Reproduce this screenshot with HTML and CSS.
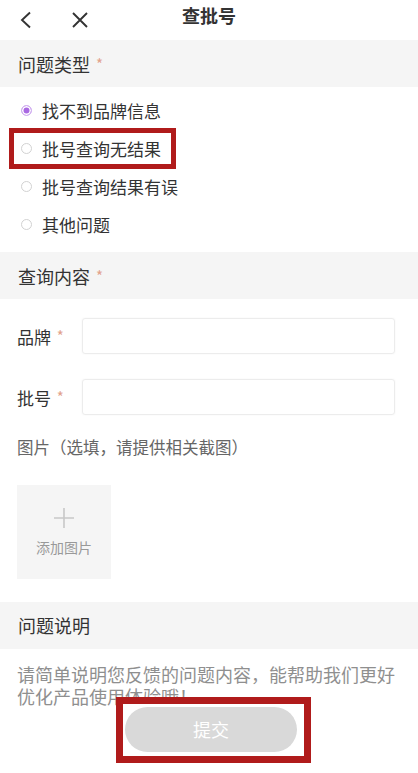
FILE: index.html
```html
<!DOCTYPE html>
<html>

<head>
  <meta charset="utf-8">
  <link rel="stylesheet" href="styles.css">
</head>

<body>
  <div class="page">

    <!-- top bar -->
    <div class="topbar">
      <svg class="icon back" width="14" height="18" viewBox="0 0 14 18">
        <path d="M11 1.5 L3 9 L11 16.5" fill="none" stroke="#333" stroke-width="1.9" />
      </svg>
      <svg class="icon close" width="18" height="18" viewBox="0 0 18 18">
        <path d="M2 2 L16 16 M16 2 L2 16" fill="none" stroke="#333" stroke-width="1.9" />
      </svg>
      <div class="title">查批号</div>
    </div>

    <div class="section-title">问题类型 <span class="star">*</span></div>
    <div class="radio-list">
      <div class="radio-item"><span class="radio checked"></span>找不到品牌信息</div>
      <div class="radio-item"><span class="radio"></span>批号查询无结果</div>
      <div class="radio-item"><span class="radio"></span>批号查询结果有误</div>
      <div class="radio-item"><span class="radio"></span>其他问题</div>
    </div>

    <div class="section-title">查询内容 <span class="star">*</span></div>
    <div class="form">
      <div class="form-row">
        <div class="label">品牌 <span class="star">*</span></div>
        <div class="input"></div>
      </div>
      <div class="form-row">
        <div class="label">批号 <span class="star">*</span></div>
        <div class="input"></div>
      </div>
      <div class="pic-label">图片（选填，请提供相关截图）</div>
      <div class="upload">
        <svg width="22" height="22" viewBox="0 0 22 22">
          <path d="M11 1 V21 M1 11 H21" stroke="#c8c8c8" stroke-width="1.6" />
        </svg>
        <div class="upload-text">添加图片</div>
      </div>
    </div>

    <div class="section-title">问题说明</div>
    <div class="desc">请简单说明您反馈的问题内容，能帮助我们更好优化产品使用体验哦！</div>

    <!-- annotation frames -->
    <div class="mark mark-radio"></div>
    <div class="mark mark-submit">
      <div class="submit">提交</div>
    </div>
  </div>
</body>

</html>
```

FILE: styles.css
```css
* {
  box-sizing: border-box;
}

body {
  margin: 0;
  background: #fff;
  font-family: "Noto Sans CJK SC", "Noto Sans", sans-serif;
  color: #333;
}

.page {
  position: relative;
  width: 418px;
  height: 773px;
  overflow: hidden;
}

.topbar {
  position: relative;
  height: 40px;
  display: flex;
  align-items: center;
  padding-left: 19px;
}

.icon.close {
  margin-left: 38px;
}

.title {
  position: absolute;
  left: 0;
  right: 0;
  top: 0;
  line-height: 31px;
  text-align: center;
  font-size: 18px;
  font-weight: bold;
  pointer-events: none;
}

.section-title {
  height: 47px;
  background: #f5f5f5;
  padding-left: 18px;
  font-size: 18px;
  line-height: 47px;
  color: #333;
}

.star {
  color: #e2a28c;
  font-size: 15px;
  vertical-align: 2px;
  margin-left: 2px;
}

.radio-list {
  padding: 4px 0 9px;
}

.radio-item {
  height: 38px;
  display: flex;
  align-items: center;
  padding-left: 21px;
  font-size: 17px;
  color: #333;
}

.radio {
  width: 11px;
  height: 11px;
  border: 1px solid #d2d2d2;
  border-radius: 50%;
  margin-right: 10px;
}

.radio.checked {
  border-color: #d3b3f1;
  background: #a968e2;
  box-shadow: inset 0 0 0 1.5px #fff;
}

.form {
  padding: 19px 0 23px 17px;
}

.form-row {
  display: flex;
  align-items: center;
  height: 36px;
  margin-bottom: 25px;
}

.label {
  width: 65px;
  font-size: 17px;
}

.input {
  width: 313px;
  height: 36px;
  border: 1px solid #ececec;
  border-radius: 3px;
  box-shadow: 0 0 2px rgba(0, 0, 0, 0.05);
}

.pic-label {
  margin-top: -5px;
  font-size: 16.5px;
  line-height: 24px;
  color: #666;
}

.upload {
  margin-top: 26px;
  width: 94px;
  height: 94px;
  background: #f5f5f5;
  display: flex;
  flex-direction: column;
  align-items: center;
  padding-top: 22px;
}

.upload-text {
  margin-top: 8px;
  font-size: 14px;
  color: #999;
}

.desc {
  padding: 14px 20px 0 17px;
  font-size: 18px;
  line-height: 22px;
  color: #8f8f8f;
}

.mark {
  position: absolute;
  border: 6px solid #b01b1b;
}

.mark-radio {
  left: 9px;
  top: 128px;
  width: 167px;
  height: 41px;
  border-width: 5px;
}

.mark-submit {
  left: 116px;
  top: 697px;
  width: 195px;
  height: 66px;
  border-width: 7px;
  background: #fff;
  padding: 3px 0 0 2px;
}

.submit {
  width: 172px;
  height: 45px;
  border-radius: 23px;
  background: #d9d9d9;
  color: #fff;
  font-size: 18px;
  line-height: 45px;
  text-align: center;
}
```
